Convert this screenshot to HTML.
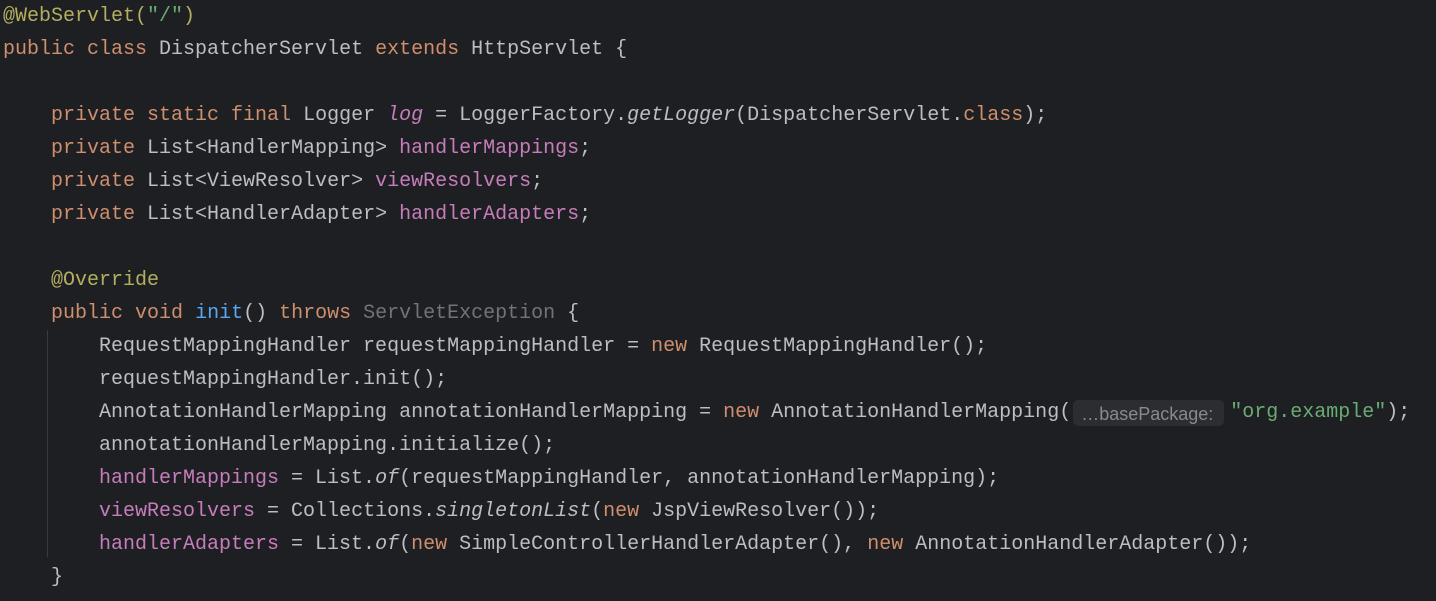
<html><head><style>
body{margin:0;background:#1e1f22;width:1436px;height:601px;overflow:hidden;position:relative}
pre{margin:0;position:absolute;left:3px;top:0;font:20px/33px "Liberation Mono",monospace;color:#bcbec4}
.k{color:#cf8e6d}.a{color:#b3ae60}.s{color:#6aab73}.f{color:#c77dbb}.m{color:#56a8f5}.g{color:#6f737a}i{font-style:italic}
.h{display:inline-flex;align-items:center;vertical-align:top;margin:4px 6px 0 2px;height:26px;width:151px;box-sizing:border-box;padding-left:8px;padding-top:1px;background:#2b2d30;border-radius:5px;color:#868a91;font:18px/18px "Liberation Sans",sans-serif}
.guide{position:absolute;left:47px;top:330px;width:1px;height:227px;background:#393b40}
</style></head><body>
<div class="guide"></div>
<pre><span class="a">@WebServlet(</span><span class="s">"/"</span><span class="a">)</span>
<span class="k">public class</span> DispatcherServlet <span class="k">extends</span> HttpServlet {

    <span class="k">private static final</span> Logger <span class="f"><i>log</i></span> = LoggerFactory.<i>getLogger</i>(DispatcherServlet.<span class="k">class</span>);
    <span class="k">private</span> List&lt;HandlerMapping&gt; <span class="f">handlerMappings</span>;
    <span class="k">private</span> List&lt;ViewResolver&gt; <span class="f">viewResolvers</span>;
    <span class="k">private</span> List&lt;HandlerAdapter&gt; <span class="f">handlerAdapters</span>;

    <span class="a">@Override</span>
    <span class="k">public void</span> <span class="m">init</span>() <span class="k">throws</span> <span class="g">ServletException</span> {
        RequestMappingHandler requestMappingHandler = <span class="k">new</span> RequestMappingHandler();
        requestMappingHandler.init();
        AnnotationHandlerMapping annotationHandlerMapping = <span class="k">new</span> AnnotationHandlerMapping(<span class="h">…basePackage:</span><span class="s">"org.example"</span>);
        annotationHandlerMapping.initialize();
        <span class="f">handlerMappings</span> = List.<i>of</i>(requestMappingHandler, annotationHandlerMapping);
        <span class="f">viewResolvers</span> = Collections.<i>singletonList</i>(<span class="k">new</span> JspViewResolver());
        <span class="f">handlerAdapters</span> = List.<i>of</i>(<span class="k">new</span> SimpleControllerHandlerAdapter(), <span class="k">new</span> AnnotationHandlerAdapter());
    }
</pre>
</body></html>
